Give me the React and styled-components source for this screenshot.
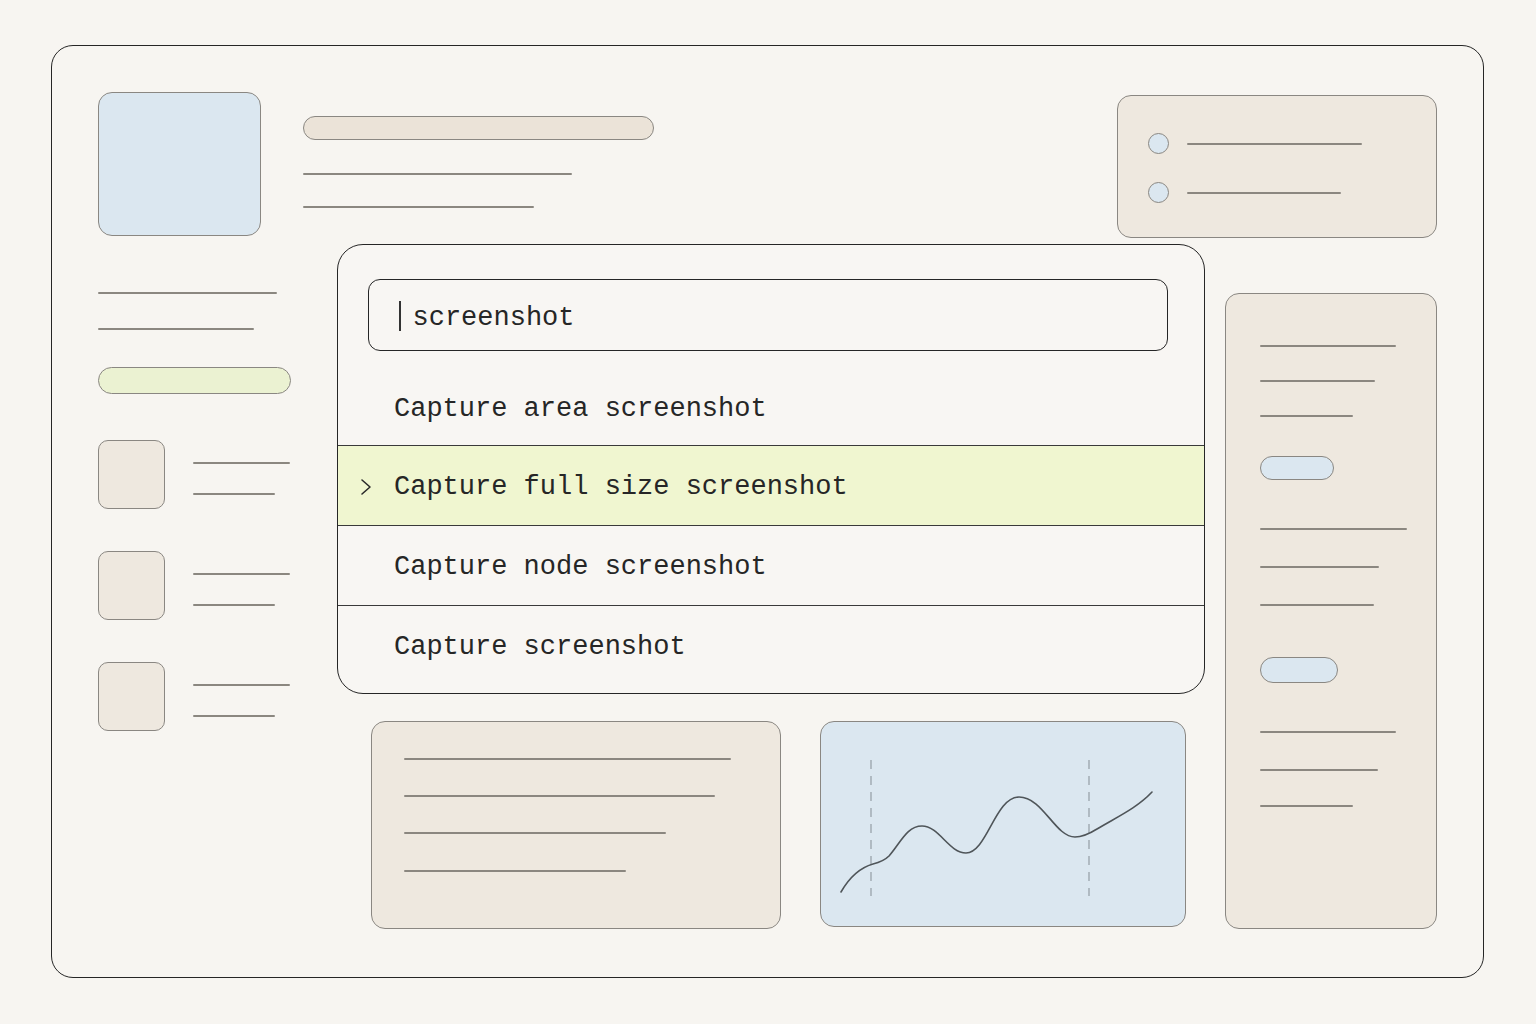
import React from 'react';
import styled, { createGlobalStyle } from 'styled-components';

const GlobalStyle = createGlobalStyle`
  html, body {
    margin: 0;
    padding: 0;
    background: #f7f5f1;
  }
  body {
    font-family: 'Liberation Mono', 'DejaVu Sans Mono', monospace;
  }
`;

const INK = '#262626';
const STROKE = '#8a8782';
const SAND = '#eee8df';
const SKY = '#dbe7f0';
const LIME = '#ebf2d2';

// ---------- frame ----------
const Frame = styled.div`
  box-sizing: border-box;
  width: 1433px;
  height: 933px;
  margin: 45px 0 0 51px;
  padding: 46px;
  border: 1.5px solid ${INK};
  border-radius: 22px;
  display: grid;
  grid-template-columns: 193px 1fr;
  column-gap: 12px;
`;

// ---------- shared bits ----------
const Line = styled.div`
  height: 2px;
  width: ${(p) => p.$w}px;
  margin-top: ${(p) => p.$mt || 0}px;
  background: #8b8780;
  border-radius: 1px;
`;

const Block = styled.div`
  box-sizing: border-box;
  width: ${(p) => p.$w}px;
  height: ${(p) => p.$h}px;
  margin-top: ${(p) => p.$mt || 0}px;
  background: ${(p) => p.$bg || SAND};
  border: 1.5px solid ${STROKE};
  border-radius: ${(p) => p.$r || 14}px;
  flex-shrink: 0;
`;

// ---------- left column ----------
const LeftCol = styled.aside`
  display: flex;
  flex-direction: column;
`;

const NavList = styled.div`
  display: flex;
  flex-direction: column;
  gap: 42px;
  margin-top: 46px;
`;

const NavItem = styled.div`
  display: flex;
  gap: 28px;
`;

const NavText = styled.div`
  display: flex;
  flex-direction: column;
  padding-top: 22px;
`;

// ---------- main ----------
const Main = styled.main`
  display: flex;
  flex-direction: column;
`;

const TopRow = styled.div`
  display: flex;
  justify-content: space-between;
  align-items: flex-start;
  height: 146px;
`;

const Heading = styled.div`
  display: flex;
  flex-direction: column;
  padding-top: 24px;
`;

const LegendCard = styled.div`
  box-sizing: border-box;
  width: 320px;
  height: 143px;
  margin-top: 3px;
  padding: 37px 0 0 30px;
  background: ${SAND};
  border: 1.5px solid ${STROKE};
  border-radius: 14px;
  display: flex;
  flex-direction: column;
  gap: 28px;
`;

const LegendRow = styled.div`
  display: flex;
  align-items: center;
  gap: 18px;
`;

const Dot = styled.span`
  box-sizing: border-box;
  width: 21px;
  height: 21px;
  border-radius: 50%;
  background: ${SKY};
  border: 1.5px solid ${STROKE};
`;

const Body = styled.div`
  display: grid;
  grid-template-columns: 902px 212px;
  column-gap: 20px;
  margin-top: 6px;
`;

const Center = styled.div`
  display: flex;
  flex-direction: column;
  padding-left: 34px;
`;

// ---------- command palette ----------
const Palette = styled.div`
  box-sizing: border-box;
  width: 868px;
  height: 450px;
  padding-top: 34px;
  background: #f8f6f3;
  border: 1.5px solid ${INK};
  border-radius: 26px;
  overflow: hidden;
  display: flex;
  flex-direction: column;
`;

const SearchBox = styled.div`
  box-sizing: border-box;
  height: 72px;
  margin: 0 36px 14px 30px;
  padding: 5px 0 0 30px;
  border: 1.5px solid ${INK};
  border-radius: 12px;
  display: flex;
  align-items: center;
  gap: 12px;
  font-size: 27px;
  color: #262626;
`;

const Caret = styled.span`
  width: 1.5px;
  height: 30px;
  margin-top: -3px;
  background: #333;
`;

const Option = styled.div`
  box-sizing: border-box;
  height: 80px;
  padding-left: 22px;
  padding-top: ${(p) => (p.$first ? 8 : 3)}px;
  display: flex;
  align-items: center;
  font-size: 27px;
  color: #262626;
  white-space: pre;
  background: ${(p) => (p.$active ? '#f0f6d0' : 'transparent')};
  border-top: ${(p) => (p.$first ? 'none' : `1.5px solid #3a3a3a`)};
`;

const Marker = styled.span`
  width: 34px;
  display: flex;
  align-items: center;
`;

// ---------- bottom cards ----------
const BottomRow = styled.div`
  display: flex;
  gap: 39px;
  margin-top: 27px;
  padding-left: 34px;
`;

const NotesCard = styled(Block)`
  padding: 36px 0 0 32px;
  display: flex;
  flex-direction: column;
`;

const ChartCard = styled(Block)`
  overflow: hidden;
  svg {
    display: block;
  }
`;

// ---------- right sidebar ----------
const Sidebar = styled.div`
  box-sizing: border-box;
  height: 636px;
  margin-top: 49px;
  padding: 51px 0 0 34px;
  background: ${SAND};
  border: 1.5px solid ${STROKE};
  border-radius: 14px;
  display: flex;
  flex-direction: column;
`;

const Chevron = () => (
  <svg width="12" height="18" viewBox="0 0 12 18" fill="none">
    <polyline points="2,2 10,9 2,16" stroke="#2a2a2a" strokeWidth="1.6" strokeLinecap="round" strokeLinejoin="round" />
  </svg>
);

const Chart = () => (
  <svg width="362" height="202" viewBox="0 0 362 202" fill="none">
    <line x1="50" y1="38" x2="50" y2="174" stroke="#9aa2aa" strokeWidth="1.3" strokeDasharray="9 7" />
    <line x1="268" y1="38" x2="268" y2="174" stroke="#9aa2aa" strokeWidth="1.3" strokeDasharray="9 7" />
    <path
      d="M20 170 C 28 156, 38 146, 52 142 C 60 140, 64 138, 68 134 C 80 120, 86 104, 101 104 C 118 104, 128 131, 145 131 C 166 131, 174 75, 198 75 C 222 75, 234 115, 254 115 C 262 115, 268 112, 276 107 C 296 95, 316 86, 331 70"
      stroke="#4f5559"
      strokeWidth="1.6"
      strokeLinecap="round"
      fill="none"
    />
  </svg>
);

const options = [
  'Capture area screenshot',
  'Capture full size screenshot',
  'Capture node screenshot',
  'Capture screenshot',
];

const navItems = [0, 1, 2];

const App = () => (
  <>
    <GlobalStyle />
    <Frame>
      <LeftCol>
        <Block $w={163} $h={144} $bg={SKY} />
        <Line $w={179} $mt={56} />
        <Line $w={156} $mt={34} />
        <Block $w={193} $h={27} $mt={37} $bg={LIME} $r={14} />
        <NavList>
          {navItems.map((i) => (
            <NavItem key={i}>
              <Block $w={67} $h={69} $r={10} />
              <NavText>
                <Line $w={97} />
                <Line $w={82} $mt={29} />
              </NavText>
            </NavItem>
          ))}
        </NavList>
      </LeftCol>

      <Main>
        <TopRow>
          <Heading>
            <Block $w={351} $h={24} $r={12} $bg="#ebe3d8" />
            <Line $w={269} $mt={33} />
            <Line $w={231} $mt={31} />
          </Heading>
          <LegendCard>
            <LegendRow>
              <Dot />
              <Line $w={175} />
            </LegendRow>
            <LegendRow>
              <Dot />
              <Line $w={154} />
            </LegendRow>
          </LegendCard>
        </TopRow>

        <Body>
          <Center>
            <Palette>
              <SearchBox>
                <Caret />
                screenshot
              </SearchBox>
              {options.map((label, idx) => (
                <Option key={label} $first={idx === 0} $active={idx === 1}>
                  <Marker>{idx === 1 && <Chevron />}</Marker>
                  {label}
                </Option>
              ))}
            </Palette>

            <BottomRow>
              <NotesCard $w={410} $h={208}>
                <Line $w={327} />
                <Line $w={311} $mt={35} />
                <Line $w={262} $mt={35} />
                <Line $w={222} $mt={36} />
              </NotesCard>
              <ChartCard $w={366} $h={206} $bg={SKY}>
                <Chart />
              </ChartCard>
            </BottomRow>
          </Center>

          <Sidebar>
            <Line $w={136} />
            <Line $w={115} $mt={33} />
            <Line $w={93} $mt={33} />
            <Block $w={74} $h={24} $mt={39} $r={12} $bg={SKY} />
            <Line $w={147} $mt={48} />
            <Line $w={119} $mt={36} />
            <Line $w={114} $mt={36} />
            <Block $w={78} $h={26} $mt={51} $r={13} $bg={SKY} />
            <Line $w={136} $mt={48} />
            <Line $w={118} $mt={36} />
            <Line $w={93} $mt={34} />
          </Sidebar>
        </Body>
      </Main>
    </Frame>
  </>
);

export default App;
